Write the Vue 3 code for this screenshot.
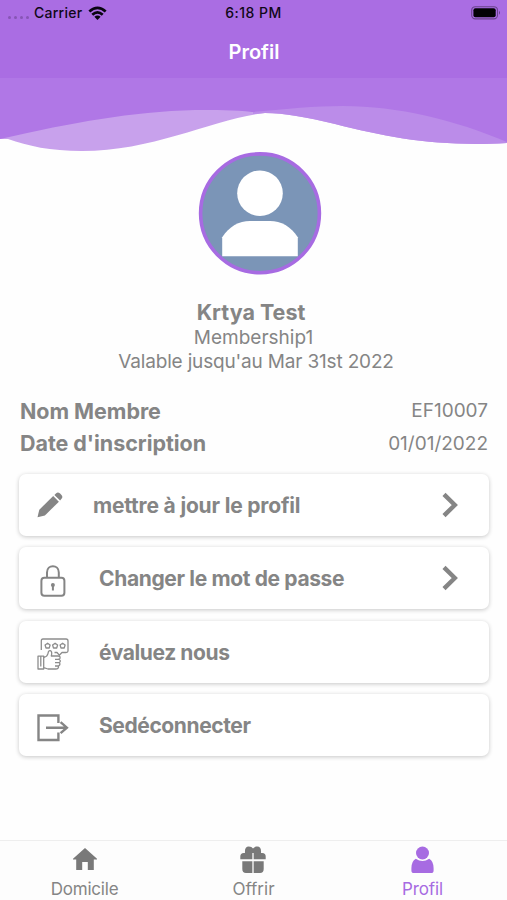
<script setup>
const items = [
  { icon: 'pencil', label: 'mettre à jour le profil', arrow: true },
  { icon: 'lock', label: 'Changer le mot de passe', arrow: true },
  { icon: 'rate', label: 'évaluez nous', arrow: false },
  { icon: 'logout', label: 'Sedéconnecter', arrow: false },
]
</script>

<template>
  <div class="screen">
    <header class="top">
      <svg class="waves" viewBox="0 0 507 160" width="507" height="160" aria-hidden="true">
        <path fill="#c8a1ec" d="M0 78H507V143C440 147 390 138 335 124C305 117 285 113 265 113C215 118 155 151 82 151C50 151 28 146 8 139H0Z" />
        <path fill="#bb8ce9" d="M253 78H507V143C440 147 390 138 335 124C305 117 285 113 265 113L253 114Z" />
        <path fill="#b077e6" d="M0 78H507V142C455 120 398 106 343 106C313 106 287 109 252 112C235 110 215 110 195 110C130 112 75 122 0 139Z" />
        <path fill="#aa6de3" d="M0 0H507V78H0Z" />
      </svg>
      <div class="status">
        <div class="carrier">
          <span class="dots"><i v-for="n in 4" :key="n"></i></span>
          <span class="carrier-name">Carrier</span>
          <svg class="wifi" viewBox="0 0 20 15" width="19" height="15">
            <path d="M1.4 5.4Q10-2.2 18.6 5.4M4.5 8.8Q10 3.8 15.5 8.8" fill="none" stroke="#080510" stroke-width="2.9" />
            <path d="M6.7 11Q10 8.2 13.3 11L10 14.3Z" fill="#080510" />
          </svg>
        </div>
        <span class="time">6:18 PM</span>
        <svg class="battery" viewBox="0 0 30 14" width="30" height="14">
          <rect x=".7" y=".7" width="25.8" height="12.2" rx="3.6" fill="none" stroke="#69438c" stroke-width="1.1" />
          <rect x="2.4" y="2.3" width="22.3" height="9" rx="2" fill="#030205" />
          <path d="M28 4.8Q30 6.8 28 8.8Z" fill="#69438c" />
        </svg>
      </div>
      <h1>Profil</h1>
    </header>

    <main>
      <svg class="avatar" viewBox="0 0 124 124" width="124" height="124">
        <circle cx="62" cy="62.3" r="59.4" fill="#7b95b7" stroke="#a76be2" stroke-width="3.6" />
        <circle cx="62" cy="42.2" r="22.8" fill="#fff" />
        <path d="M24.2 105.3V86.3C31 75.5 41 70 52 70H72C83 70 93 75.5 99.8 86.3V105.3Z" fill="#fff" />
      </svg>
      <section class="identity">
        <h2>Krtya Test</h2>
        <p class="membership">Membership1</p>
        <p class="valid">Valable jusqu'au Mar 31st 2022</p>
      </section>
      <dl>
        <div><dt class="member">Nom Membre</dt><dd class="code">EF10007</dd></div>
        <div><dt class="date-label">Date d'inscription</dt><dd class="date">01/01/2022</dd></div>
      </dl>
      <section class="menu">
        <button v-for="item in items" :key="item.icon" type="button" class="row" :class="item.icon">
          <span class="icon">
            <svg v-if="item.icon === 'pencil'" viewBox="0 0 26 26" width="26" height="26" fill="#858585">
              <path d="M.5 25.3L2.3 17.8L16.2 4.1L21.9 9.7L7.9 23.4Z" />
              <path d="M17.4 2.9L19.2 1.2Q21-.5 23.1 1.6L24.5 3Q26.1 4.9 24.7 6.5L23.1 8.4Z" />
            </svg>
            <svg v-else-if="item.icon === 'lock'" viewBox="0 0 26 32" width="26" height="32" fill="none" stroke="#858585" stroke-width="2">
              <rect x="1.4" y="12.7" width="23" height="18" rx="3" />
              <path d="M7 12V7.5C7-.8 18.8-.8 18.8 7.5V12" />
              <circle cx="12.9" cy="20" r="2" fill="#858585" stroke="none" />
              <path d="M12.9 20V25.5" />
            </svg>
            <svg v-else-if="item.icon === 'rate'" viewBox="0 0 32 32" width="32" height="32" fill="none" stroke="#8d8d8d" stroke-width="1.3" stroke-linejoin="round">
              <path d="M4.3 12V3Q4.3 1 6 1H29Q31 1 31 3V13Q31 14.5 29 14.5H25L22.3 17.2L20 14.5H17.5" />
              <path d="M10.6 5.2L13.1 7L12.2 10H9L8.1 7ZM18.1 5.2L20.6 7L19.7 10H16.5L15.6 7ZM25.6 5.2L28.1 7L27.2 10H24L23.1 7Z" />
              <path d="M1 18.2H6.7V31H1ZM3.8 18.2V28.5M6.7 19.5Q10.4 18.6 11 15.5Q11.5 12.2 13.3 12.6Q15.5 13.3 14.3 18H21Q23.5 18 23 20.2Q22.6 21.3 20.8 21.3H18M22 21.3Q24.4 22.7 22.4 24.6H18M22.4 24.6Q23.8 26.7 21.5 28H18M21.5 28Q22 31 18.5 31H11L6.7 29.6" />
            </svg>
            <svg v-else viewBox="0 0 32 28" width="32" height="28" fill="none" stroke="#858585" stroke-width="2.4">
              <path d="M21.4 9V1.5H1.5V26H21.4V18.5M9 13.7H30M23.6 8.2L29.9 13.7L23.6 19.2" />
            </svg>
          </span>
          <span class="label">{{ item.label }}</span>
          <svg v-if="item.arrow" class="chevron" viewBox="0 0 16 26" width="16" height="26">
            <path d="M2 2.4L12.8 13L2 23.6" fill="none" stroke="#858585" stroke-width="4.4" />
          </svg>
        </button>
      </section>
    </main>

    <nav>
      <a>
        <svg viewBox="0 0 26 28" width="26" height="28" fill="#797979"><path d="M13 2L25 12.7V13.6H21.8V24H15.8V16H10.2V24H4.2V13.6H1V12.7Z" /></svg>
        <span class="home-label">Domicile</span>
      </a>
      <a>
        <svg class="gift" viewBox="0 0 26 28" width="26" height="28" fill="#797979">
          <path d="M.3 13.2V10.5Q.3 7 3.8 7H5C4.6 2.8 6 .6 8.7.6C11 .6 12 1.4 13 2.6C14 1.4 15 .6 17.3.6C20 .6 21.4 2.8 21 7H22.2Q25.7 7 25.7 10.5V13.2Z" />
          <path d="M2.3 15.2H23.7V23Q23.7 27 20 27H6Q2.3 27 2.3 23Z" />
          <path d="M13 7V27" stroke="#fdfdfd" stroke-width="1.3" />
        </svg>
        <span class="gift-label">Offrir</span>
      </a>
      <a class="active">
        <svg viewBox="0 0 26 28" width="26" height="28" fill="#a76be2">
          <circle cx="12.5" cy="7" r="6.5" />
          <path d="M5.8 12.7Q12.5 17.5 19.2 12.7Q23.6 15 23.6 22.3V24.4Q23.6 27 21 27H4Q1.4 27 1.4 24.4V22.3Q1.4 15 5.8 12.7Z" />
        </svg>
        <span class="profile-label">Profil</span>
      </a>
    </nav>
  </div>
</template>

<style>
body { margin: 0; background: #fefefe; }
</style>

<style scoped>
* { box-sizing: border-box; }
.screen { width: 507px; height: 900px; display: flex; flex-direction: column; overflow: hidden; background: #fefefe; color: #858585; font-family: Inter, "Liberation Sans", sans-serif; }
.top { height: 151px; position: relative; }
.waves { position: absolute; top: 0; left: 0; display: block; }
.status { position: relative; display: grid; grid-template-columns: 1fr auto 1fr; height: 26px; align-items: center; padding: 0 6px 0 8px; color: #100818; font-size: 14px; font-weight: 500; line-height: 26px; }
.carrier { display: flex; align-items: center; }
.carrier-name { letter-spacing: .25px; }
.time { letter-spacing: .5px; transform: translateX(-1px); }
.dots { display: flex; gap: 3px; width: 26px; padding-top: 9px; }
.dots i { width: 3px; height: 3px; border-radius: 50%; background: #8755b5; }
.wifi { margin-left: 6px; }
.battery { justify-self: end; }
h1 { position: relative; margin: 12px 0 0; padding-left: 1px; text-align: center; color: white; font-size: 20px; line-height: 29px; font-weight: 600; }
main { flex: 1; padding: 0 18px; }
.avatar { display: block; margin: 0 auto; transform: translateX(6px); }
.identity { padding-top: 25px; text-align: center; }
h2 { margin: 0; padding-right: 5px; font-size: 21.5px; line-height: 24px; font-weight: 650; }
p { margin: 0; font-size: 19px; line-height: 24px; }
.membership { padding-top: 2px; }
.valid { padding-left: 5px; letter-spacing: -.17px; }
dl { margin: 20.5px 0 0; padding: 0 1px 0 2px; }
dl div { display: flex; justify-content: space-between; height: 32.5px; align-items: center; }
dt { font-size: 21.5px; font-weight: 650; letter-spacing: -.05px; }
dd { margin: 0; font-size: 19px; }
.menu { display: flex; flex-direction: column; gap: 11.5px; padding: 14px 0 0 1px; }
.row { display: flex; align-items: center; width: 100%; height: 62px; padding: 0 31px 0 18px; border: 0; border-radius: 7px; background: white; box-shadow: 0 1px 4px rgb(0 0 0 / 22%); color: #858585; font-family: inherit; font-size: 21px; font-weight: 650; text-align: left; }
.icon { display: flex; flex: none; width: 62px; }
.pencil .icon { width: 56px; }
.lock .icon { padding: 6px 0 0 3px; }
.rate .icon, .logout .icon { padding-top: 5px; }
.label { white-space: nowrap; padding-top: 1px; }
.pencil .label { letter-spacing: -.18px; }
.lock .label { letter-spacing: -.36px; }
.rate .label, .logout .label { letter-spacing: -.4px; }
.chevron { margin-left: auto; }
nav { height: 60px; display: grid; grid-template-columns: repeat(3, 1fr); border-top: 1px solid #eee; background: #fdfdfd; }
nav a { display: flex; flex-direction: column; align-items: center; padding-top: 5px; font-size: 17px; line-height: 31px; color: #858585; }
nav svg { flex: none; }
.gift { transform: translateX(-1px); }
.home-label { letter-spacing: -.2px; }
.profile-label { letter-spacing: -.1px; }
nav .active { color: #a76be2; }
</style>
